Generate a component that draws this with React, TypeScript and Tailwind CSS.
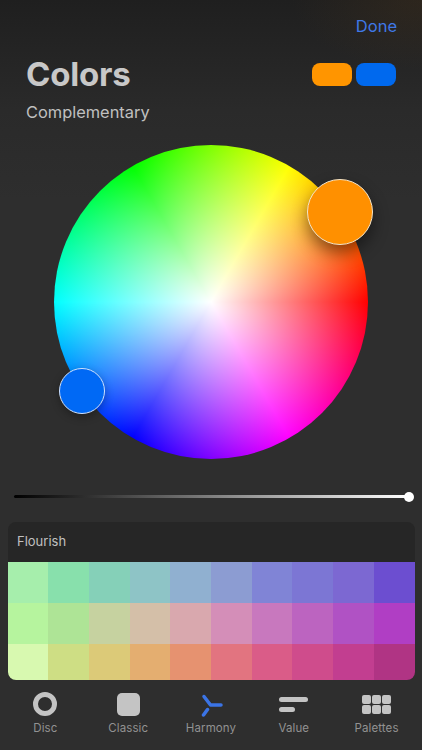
const ROWS = [
  ["#a6eeac", "#88e0ac", "#85d0b8", "#8ec4c6", "#90b0d0", "#8c9cd2", "#8084d6", "#7c76d4", "#7c68d2", "#6c4ed0"],
  ["#b6f49e", "#aee496", "#c6d2a0", "#d4bfa8", "#d9a8ae", "#d48eb8", "#c878be", "#bc64c0", "#b052c4", "#b03ec4"],
  ["#d8f9b0", "#cede84", "#dcca78", "#e4ae70", "#e69270", "#e27480", "#da5c88", "#cf4c8c", "#c23e90", "#b03484"],
];

function DiscIcon() {
  return <div className="h-6 w-6 rounded-full border-[5px] border-[#c4c4c4]" />;
}

function ClassicIcon() {
  return <div className="h-[23px] w-[23px] rounded-[5px] bg-[#c4c4c4]" />;
}

function HarmonyIcon() {
  return (
    <svg width="24" height="26" viewBox="0 0 24 26" fill="none" stroke="#3b74e6" strokeWidth="3.5" strokeLinecap="round">
      <path d="M5 5.5 L11.5 14 L22 14" strokeLinejoin="round" />
      <path d="M8.5 18.5 L4.5 24" />
    </svg>
  );
}

function ValueIcon() {
  return (
    <div className="flex flex-col items-start gap-[5px]">
      <div className="h-[5px] w-[29px] rounded-full bg-[#c4c4c4]" />
      <div className="h-[5px] w-[16px] rounded-full bg-[#c4c4c4]" />
    </div>
  );
}

function PalettesIcon() {
  return (
    <div className="grid grid-cols-3 gap-[1px]">
      {Array.from({ length: 6 }).map((_, i) => (
        <div key={i} className="h-[9px] w-[9px] rounded-[2px] bg-[#c4c4c4]" />
      ))}
    </div>
  );
}

function Tab({ label, children }: { label: string; children: React.ReactNode }) {
  return (
    <div className="flex w-[82.8px] flex-col items-center">
      <div className="flex h-[26px] items-center justify-center">{children}</div>
      <span className="mt-[4px] text-[11.5px] leading-[14px] tracking-[0.1px] text-[#929292]">{label}</span>
    </div>
  );
}

export default function App() {
  return (
    <div className="flex h-[750px] w-[422px] flex-col overflow-hidden bg-[radial-gradient(130px_70px_at_100%_0%,#4a341a55,#4a341a00),linear-gradient(180deg,#1f1f1f_0px,#2a2a2a_110px,#2e2e2e_200px)] font-['Inter','Liberation_Sans',sans-serif]">
      <div className="flex justify-end pr-[25px] pt-[16px]">
        <span className="text-[16.5px] leading-[21px] text-[#3f78e6]">Done</span>
      </div>
      <div className="mt-[17px] flex items-center justify-between pl-[26px] pr-[26px]">
        <h1 className="text-[33px] leading-[40px] font-bold tracking-[-0.2px] text-[#c8c8c8]">Colors</h1>
        <div className="flex gap-[3.5px]">
          <div className="h-[23px] w-[40.5px] rounded-[8px] bg-[#ff9500]" />
          <div className="h-[23px] w-[40.5px] rounded-[8px] bg-[#0069ee]" />
        </div>
      </div>
      <p className="mt-[7px] pl-[26px] text-[16.4px] leading-[22px] text-[#c0c0c0]">Complementary</p>

      <div className="relative mx-auto mt-[22px] h-[314px] w-[314px]">
        <div className="h-full w-full rounded-full bg-[radial-gradient(circle_closest-side,#ffffff_0%,#ffffff00_100%),conic-gradient(from_30deg,#ffff00,#ff0000,#ff00ff,#0000ff,#00ffff,#00ff00,#ffff00)]" />
        <div className="absolute left-[253px] top-[34px] h-[66px] w-[66px] rounded-full border border-[#f4e4c8] bg-[#ff9000] shadow-[0_8px_16px_rgba(0,0,0,0.45)]" />
        <div className="absolute left-[5px] top-[223px] h-[46px] w-[46px] rounded-full border border-[#cfe2ff] bg-[#0069f5] shadow-[0_3px_8px_rgba(0,0,0,0.3)]" />
      </div>

      <div className="relative ml-[13.5px] mt-[36px] h-[3px] w-[395px] rounded-full bg-[linear-gradient(90deg,#000000,#ffffff)]">
        <div className="absolute -right-[5px] -top-[3.5px] h-[10px] w-[10px] rounded-full bg-white" />
      </div>

      <div className="mx-[7.5px] mt-[24px] overflow-hidden rounded-[8px] bg-[#262626]">
        <div className="flex h-[40px] items-center pl-[9.5px] text-[13px] text-[#c0c0c0]">Flourish</div>
        <div className="flex flex-col">
          {ROWS.map((row, r) => (
            <div key={r} className={`flex ${r === 2 ? "h-[36px]" : "h-[41px]"}`}>
              {row.map((c) => (
                <div key={c} className="flex-1" style={{ background: c }} />
              ))}
            </div>
          ))}
        </div>
      </div>

      <div className="mt-[11px] flex justify-between px-[4px]">
        <Tab label="Disc"><DiscIcon /></Tab>
        <Tab label="Classic"><ClassicIcon /></Tab>
        <Tab label="Harmony"><HarmonyIcon /></Tab>
        <Tab label="Value"><ValueIcon /></Tab>
        <Tab label="Palettes"><PalettesIcon /></Tab>
      </div>
    </div>
  );
}
